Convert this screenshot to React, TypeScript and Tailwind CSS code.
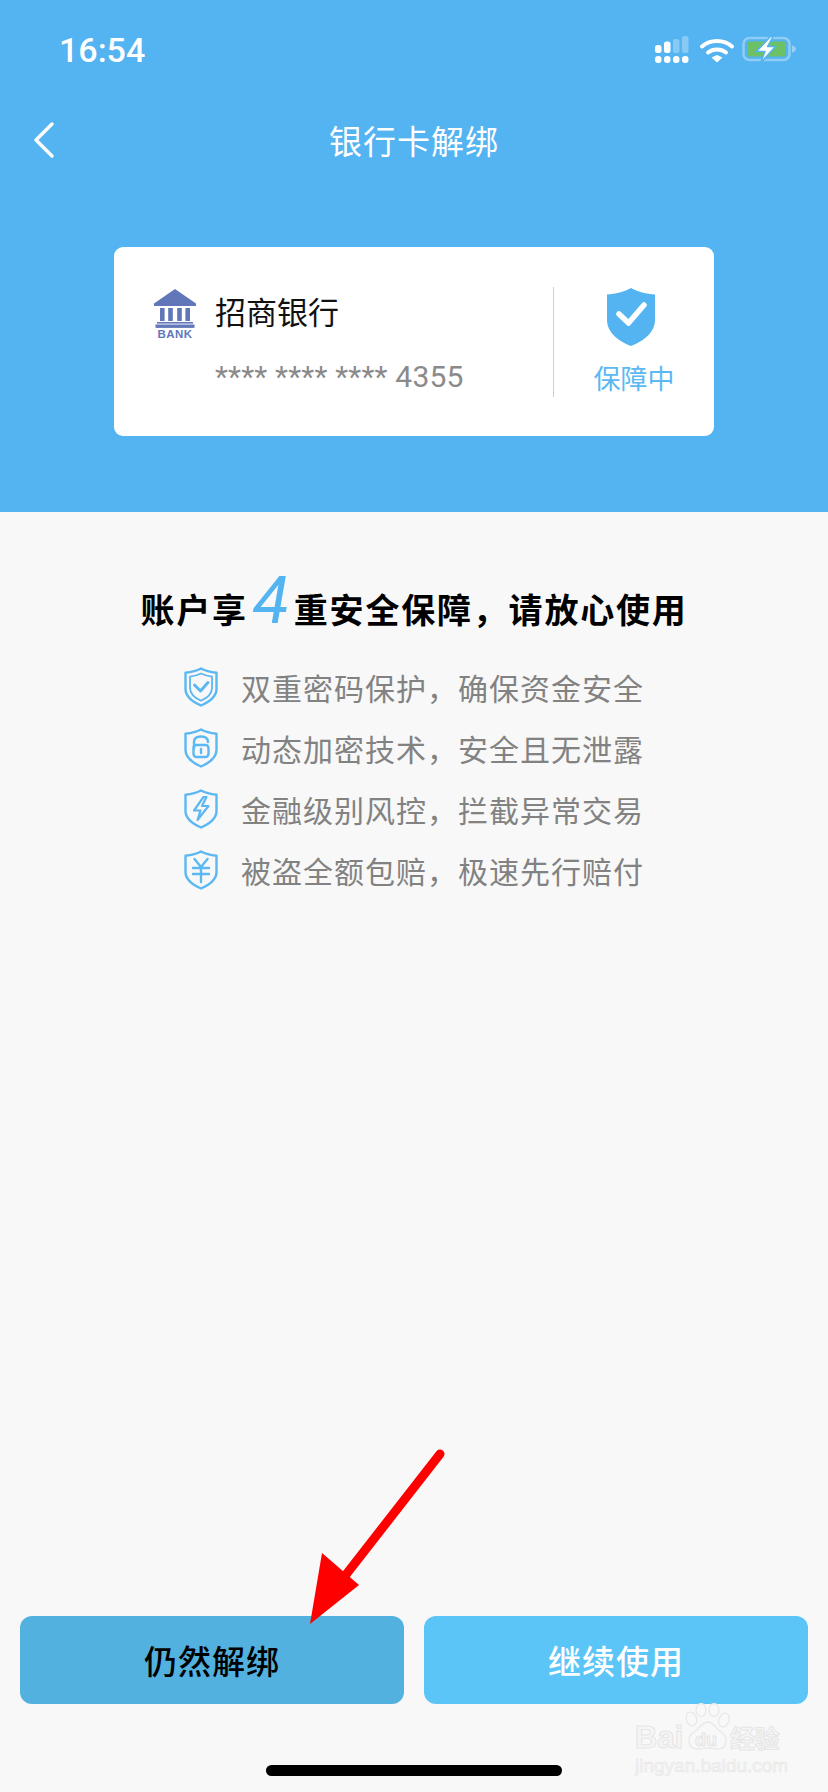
import React from 'react';

const FONT = "font-['Noto_Sans_CJK_SC','Noto_Sans',sans-serif]";

const SHIELD = 'M17 1.5C21.5 4 27 5.2 32.5 5.7V22C32.5 30 25 35 17 38.5C9 35 1.5 30 1.5 22V5.7C7 5.2 12.5 4 17 1.5Z';

function ShieldIcon({ children }: { children: React.ReactNode }) {
  return (
    <svg width="34" height="40" viewBox="0 0 34 40" fill="none" stroke="#5cb8f2" strokeWidth="2.4" strokeLinejoin="round" strokeLinecap="round">
      <path d={SHIELD} />
      {children}
    </svg>
  );
}

const features: { text: string; icon: React.ReactNode }[] = [
  {
    text: '双重密码保护，确保资金安全',
    icon: (
      <>
        <path d="M17 6.5C20.5 8.2 24 9.2 28 9.6V21C28 27.5 23 31 17 33.8C11 31 6 27.5 6 21V9.6C10 9.2 13.5 8.2 17 6.5Z" strokeWidth="1.8" />
        <path d="M10.5 18L16.5 24L24 15.5" strokeWidth="3" />
      </>
    ),
  },
  {
    text: '动态加密技术，安全且无泄露',
    icon: (
      <>
        <path d="M10 20V14C10 10 13 8.5 17 8.5C21 8.5 24 10 24 14" />
        <rect x="9.5" y="17" width="15" height="12" rx="3" />
        <path d="M17 21V25" />
      </>
    ),
  },
  {
    text: '金融级别风控，拦截异常交易',
    icon: <path d="M19.5 8L10 21.5H16.5L13.5 31L24.5 17H18L22.5 8Z" strokeWidth="2.2" />,
  },
  {
    text: '被盗全额包赔，极速先行赔付',
    icon: <path d="M10.5 9L17 17L23.5 9M9 18H25M9 24H25M17 17V32" />,
  },
];

function StatusIcons() {
  return (
    <svg width="142" height="28" viewBox="0 0 142 28" fill="none">
      <g fill="#fff">
        <rect x="0" y="9" width="6.5" height="8" rx="2.5" />
        <rect x="9" y="5.5" width="6.5" height="11.5" rx="2.5" />
        <rect x="0" y="20" width="6.5" height="7" rx="3" />
        <rect x="9" y="20" width="6.5" height="7" rx="3" />
        <rect x="18" y="20" width="6.5" height="7" rx="3" />
        <rect x="27" y="20" width="6.5" height="7" rx="3" />
      </g>
      <g fill="#fff" fillOpacity="0.3">
        <rect x="18" y="3" width="6.5" height="14" rx="2.5" />
        <rect x="27" y="0" width="6.5" height="17" rx="2.5" />
      </g>
      <path d="M47 10.5C55 3 69 3 77 10.5" stroke="#fff" strokeWidth="4" strokeLinecap="round" />
      <path d="M53 16.5C58 12.5 66 12.5 71 16.5" stroke="#fff" strokeWidth="4" strokeLinecap="round" />
      <path d="M56.5 21.5L62 19L67.5 21.5L62 26.5Z" fill="#fff" />
      <rect x="88.5" y="2" width="46" height="22" rx="6" stroke="#fff" strokeOpacity="0.35" strokeWidth="2.5" />
      <rect x="92" y="5.5" width="39" height="15" rx="2.5" fill="#6cc167" />
      <path d="M137 9.5C139.5 10 141 11.5 141 13C141 14.5 139.5 16 137 16.5Z" fill="#fff" fillOpacity="0.4" />
      <path d="M115.5 0.5L101.5 15.5H110L105.5 27L120.5 10.5H112.5L118 0.5Z" fill="#fff" stroke="#54b3f1" strokeWidth="1.5" strokeLinejoin="round" />
    </svg>
  );
}

function BankIcon() {
  return (
    <svg width="42" height="50" viewBox="0 0 42 50" fill="#6277ba">
      <path d="M21 0L42 14.5V17H0V14.5Z" />
      <rect x="6" y="19" width="4.6" height="13" />
      <rect x="14.2" y="19" width="4.6" height="13" />
      <rect x="23.2" y="19" width="4.6" height="13" />
      <rect x="31.4" y="19" width="4.6" height="13" />
      <rect x="3" y="33" width="36" height="1.6" />
      <rect x="1.5" y="35.5" width="39" height="3.4" />
      <text x="21" y="49" textAnchor="middle" fontSize="11.5" fontWeight="700" fontFamily="'Liberation Sans',sans-serif" letterSpacing="0.4">
        BANK
      </text>
    </svg>
  );
}

function Watermark() {
  return (
    <div className="absolute left-[635px] top-[1703px] flex w-[150px] flex-col text-[#f5f5f5] [-webkit-text-stroke:1px_#e6e6e6]">
      <svg className="absolute left-[50px] top-0" width="46" height="48" viewBox="0 0 46 48" fill="#f8f8f8" stroke="#e8e8e8" strokeWidth="1.3">
        <ellipse cx="6.5" cy="16" rx="5" ry="7" transform="rotate(-20 6.5 16)" />
        <ellipse cx="16" cy="7" rx="5" ry="6.5" />
        <ellipse cx="29" cy="7" rx="5" ry="6.5" />
        <ellipse cx="39" cy="17" rx="5" ry="7" transform="rotate(20 39 17)" />
        <path d="M23 19C29 19 31 26 36 29C44 34 42 46 33 46C28 46 26 45 23 45C20 45 17 46 12 46C3 46 1 34 9 29C14 26 17 19 23 19Z" />
      </svg>
      <div className="relative mt-[19px] flex h-[30px] items-center font-['Liberation_Sans',sans-serif] text-[31px] font-bold leading-none">
        <span className="w-[60px]">Bai</span>
        <span className="w-[35px] pt-[6px] text-[18px]">du</span>
        <span className={`${FONT} text-[25px] tracking-[-0.5px]`}>经验</span>
      </div>
      <div className="relative mt-[4px] whitespace-nowrap font-['Liberation_Sans',sans-serif] text-[19px] leading-[20px] [-webkit-text-stroke:0.6px_#e6e6e6]">jingyan.baidu.com</div>
    </div>
  );
}

export default function App() {
  return (
    <div className={`${FONT} relative flex h-[1792px] w-[828px] flex-col overflow-hidden bg-[#f8f8f8]`}>
      <header className="flex h-[512px] flex-col bg-[#54b3f1] text-white">
        <div className="flex items-center justify-between pl-[59px] pr-[31px] pt-[30px]">
          <span className="font-['Roboto',sans-serif] text-[34px] font-medium leading-[40px]">16:54</span>
          <StatusIcons />
        </div>
        <div className="relative mt-[46px] flex h-[48px] items-center justify-center">
          <svg className="absolute left-[32px] top-[6px]" width="24" height="36" viewBox="0 0 24 36" fill="none" stroke="#fff" strokeWidth="3.4" strokeLinecap="round" strokeLinejoin="round">
            <path d="M20 2L4 18L20 34" />
          </svg>
          <h1 className="text-[33px] font-normal leading-[48px] tracking-[1px]">银行卡解绑</h1>
        </div>
        <div className="mx-[114px] mt-[83px] flex h-[189px] items-center rounded-[9px] bg-white">
          <div className="flex flex-1 items-start pl-[40px]">
            <div className="pt-[3px]">
              <BankIcon />
            </div>
            <div className="ml-[19px] flex flex-col pt-[3px]">
              <span className="text-[31px] leading-[44px] text-[#111]">招商银行</span>
              <span className="mt-[24px] font-['Roboto',sans-serif] text-[30px] leading-[40px] tracking-[0.2px] text-[#8a8a8a]">**** **** **** 4355</span>
            </div>
          </div>
          <div className="h-[110px] w-px bg-[#cfcfcf]" />
          <div className="flex w-[160px] flex-col items-center">
            <svg className="mr-[6px]" width="50" height="60" viewBox="0 0 50 60">
              <path d="M25 1C31 4.5 41 7 49 7.5V33C49 45 38 54 25 59C12 54 1 45 1 33V7.5C9 7 19 4.5 25 1Z" fill="#54b3f1" />
              <path d="M13 27L22.5 36L38 18" fill="none" stroke="#fff" strokeWidth="5.5" strokeLinecap="round" strokeLinejoin="round" />
            </svg>
            <span className="mt-[12px] text-[27px] leading-[38px] text-[#5cb8f2]">保障中</span>
          </div>
        </div>
      </header>

      <main className="flex flex-1 flex-col items-center">
        <h2 className="mt-[64px] flex h-[66px] items-center whitespace-nowrap text-[34px] font-bold leading-[66px] tracking-[1.8px] text-black">
          账户享
          <span className="mx-[5px] -mt-[16px] font-['Roboto',sans-serif] text-[66px] font-normal italic leading-[66px] tracking-normal text-[#54b3f1]">4</span>
          重安全保障，请放心使用
        </h2>
        <ul className="mt-[25px] flex flex-col gap-[21px]">
          {features.map((f) => (
            <li key={f.text} className="flex h-[40px] items-center">
              <ShieldIcon>{f.icon}</ShieldIcon>
              <span className="ml-[23px] text-[30px] leading-[40px] tracking-[1px] text-[#828282]">{f.text}</span>
            </li>
          ))}
        </ul>

        <div className="mt-auto flex w-full gap-[20px] px-[20px]">
          <button className="h-[88px] flex-1 rounded-[12px] bg-[#52b1de] text-[33px] font-medium leading-none tracking-[1px] text-black">仍然解绑</button>
          <button className="h-[88px] flex-1 rounded-[12px] bg-[#5cc5f7] text-[33px] font-medium leading-none tracking-[1px] text-white">继续使用</button>
        </div>
        <div className="mb-[16px] mt-[61px] h-[11px] w-[296px] rounded-full bg-black" />
      </main>

      <Watermark />

      <svg className="absolute left-[300px] top-[1440px]" width="150" height="190" viewBox="0 0 150 190">
        <path d="M140 14L34 150" stroke="#ff0000" strokeWidth="9" strokeLinecap="round" fill="none" />
        <path d="M10 184L22 113L59 145Z" fill="#ff0000" />
      </svg>
    </div>
  );
}
